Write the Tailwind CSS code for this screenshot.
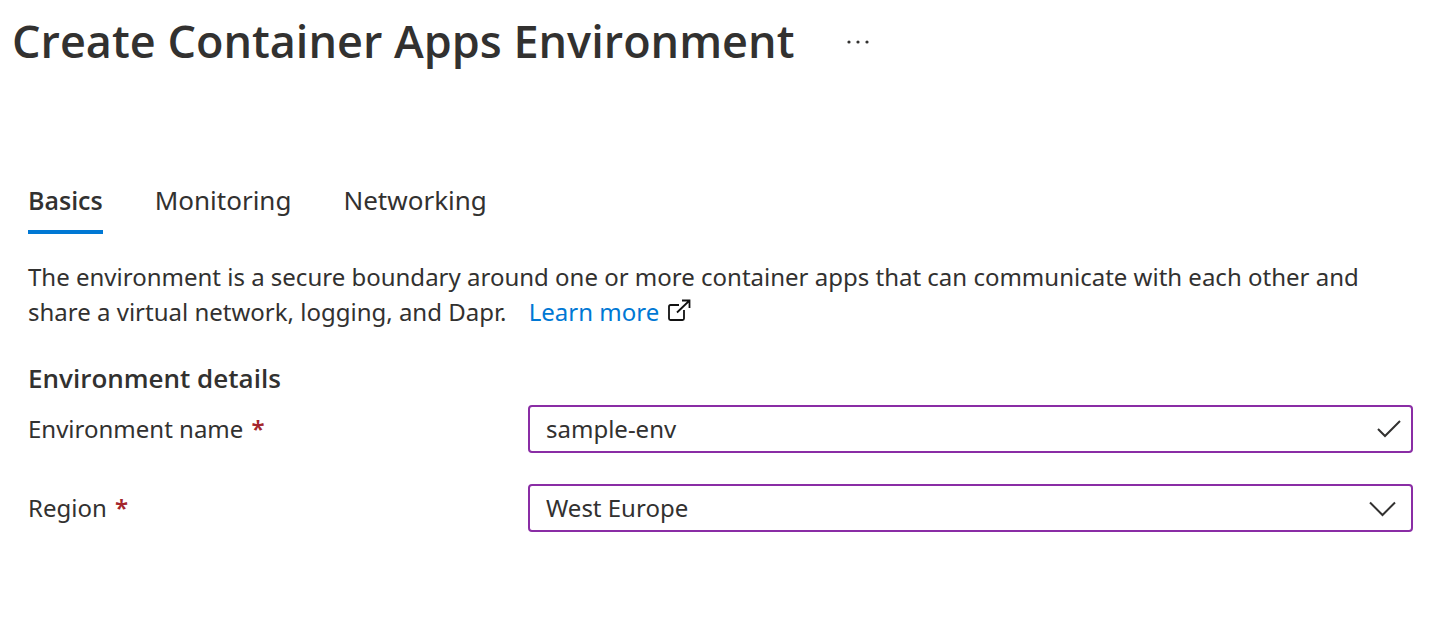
<!DOCTYPE html>
<html lang="en">
<head>
<meta charset="utf-8">
<meta name="viewport" content="width=device-width, initial-scale=1">
<title>Create Container Apps Environment</title>
<script src="https://cdn.jsdelivr.net/npm/@tailwindcss/browser@4"></script>
</head>
<body class="bg-white font-['Segoe_UI','Noto_Sans',sans-serif] text-[24px] text-[#323130]">
<header class="flex items-center gap-12 px-3 pt-2">
  <h1 class="pb-0.5 font-['Segoe_UI','Open_Sans',sans-serif] text-[45px] leading-[66px] font-semibold">Create Container Apps Environment</h1>
  <button type="button" aria-label="More actions" class="flex h-8 w-8 items-center justify-center">
    <svg class="h-4 w-6" viewBox="0 0 24 16" fill="#323130" aria-hidden="true"><circle cx="3" cy="8" r="1.6"/><circle cx="12" cy="8" r="1.6"/><circle cx="21" cy="8" r="1.6"/></svg>
  </button>
</header>
<main class="pt-[94px] pr-[39px] pl-7">
  <nav class="flex gap-[52px] text-[26px] leading-[60px]" role="tablist">
    <button type="button" role="tab" aria-selected="true" class="border-b-4 border-[#0078d4] font-['Segoe_UI','Open_Sans',sans-serif] text-[25px] font-semibold">Basics</button>
    <button type="button" role="tab" aria-selected="false" class="border-b-4 border-transparent">Monitoring</button>
    <button type="button" role="tab" aria-selected="false" class="border-b-4 border-transparent">Networking</button>
  </nav>
  <p class="mt-[25px] leading-[35px]">The environment is a secure boundary around one or more container apps that can communicate with each other and share a virtual network, logging, and Dapr. <a href="#" class="ml-4 inline-flex items-center gap-2 align-top text-[#0078d4]">Learn more<svg class="mb-0.5 h-6 w-6" viewBox="0 0 24 24" fill="none" stroke="#111" stroke-width="1.8" aria-hidden="true"><path d="M12 6H3.500Q2 6 2 7.500V19.500Q2 21 3.500 21H15.500Q17 21 17 19.500V11M10 13.500 22.500 1.500M15 1.500H22.500V9"/></svg></a></p>
  <h2 class="mt-[31px] font-['Segoe_UI','Open_Sans',sans-serif] text-[26px] leading-9 font-semibold">Environment details</h2>
  <form class="mt-[9px] grid gap-y-[31px]">
    <div class="flex items-center">
      <label for="env" class="w-[500px] shrink-0">Environment name <span class="ml-0.5 font-semibold text-[#a4262c]">*</span></label>
      <div class="relative flex-1">
        <input id="env" type="text" value="sample-env" class="block h-12 w-full rounded-sm border-2 border-[#8a2da5] px-4 pb-0.5 outline-none">
        <svg class="pointer-events-none absolute top-3 right-3 h-6 w-6" viewBox="0 0 24 24" fill="none" stroke="#323130" stroke-width="2" aria-hidden="true"><path d="m1 12 7 7L23 4"/></svg>
      </div>
    </div>
    <div class="flex items-center">
      <label for="region" class="w-[500px] shrink-0">Region <span class="ml-0.5 font-semibold text-[#a4262c]">*</span></label>
      <div class="relative flex-1">
        <select id="region" class="block h-12 w-full appearance-none rounded-sm border-2 border-[#8a2da5] bg-white px-4 outline-none"><option>West Europe</option></select>
        <svg class="pointer-events-none absolute top-3 right-4 h-6 w-7" viewBox="0 0 28 24" fill="none" stroke="#323130" stroke-width="2" aria-hidden="true"><path d="M1 6.500 13.500 19 26 6.500"/></svg>
      </div>
    </div>
  </form>
</main>
</body>
</html>
